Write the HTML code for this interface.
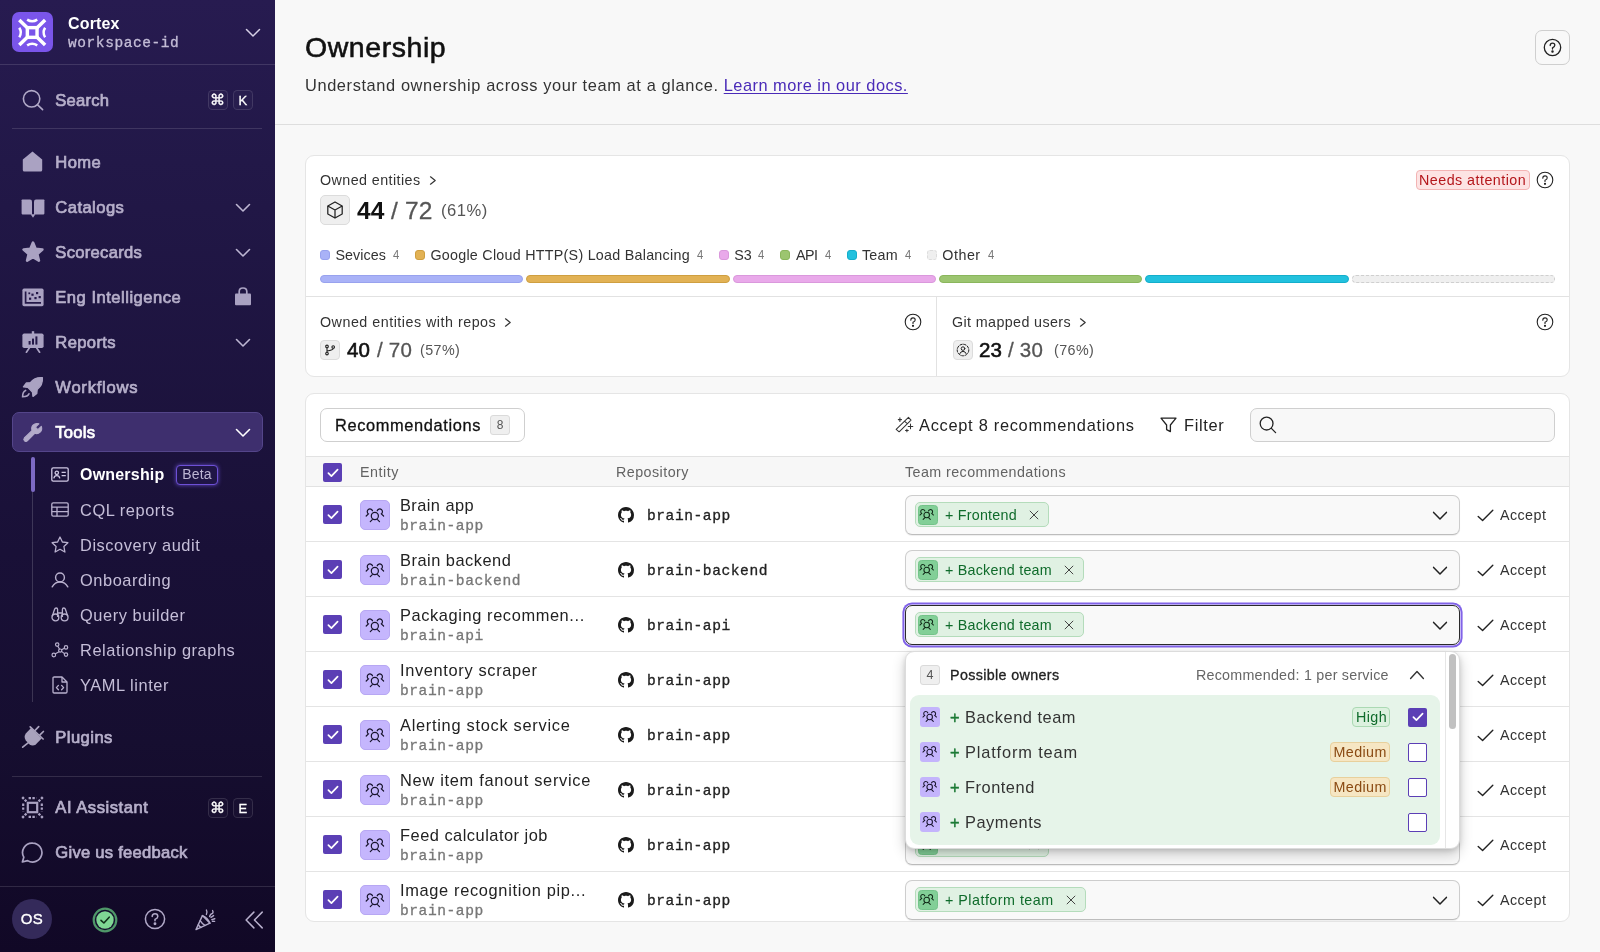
<!DOCTYPE html>
<html lang="en">
<head>
<meta charset="utf-8">
<title>Ownership</title>
<style>
*{box-sizing:border-box;margin:0;padding:0}
html,body{width:1600px;height:952px;overflow:hidden}
body{font-family:"Liberation Sans",sans-serif;background:#f8f8f8;color:#222;position:relative;-webkit-font-smoothing:antialiased}
.mono{font-family:"Liberation Mono",monospace;-webkit-text-stroke:.3px currentColor}
svg{display:block}
.abs{position:absolute}

/* ============ SIDEBAR ============ */
#sb{position:absolute;left:0;top:0;width:275px;height:952px;background:linear-gradient(180deg,#271b50 0%,#221848 17%,#191037 58%,#160e30 78%,#110826 100%);color:#c9c2dc}
#sb .hr{position:absolute;height:1px;background:rgba(255,255,255,.13)}
#sb .nav{position:absolute;left:55.3px;font-weight:400;font-size:16.6px;-webkit-text-stroke:.7px currentColor;line-height:20px;white-space:nowrap;color:#b6afca}
#sb .sub{position:absolute;left:80px;font-size:16.4px;letter-spacing:.55px;line-height:20px;white-space:nowrap;color:#c5bed8}
#sb .ico{position:absolute}
#sb .kbd{position:absolute;width:19.5px;height:19.5px;border:1px solid rgba(255,255,255,.12);border-radius:4.5px;color:#fff;font-size:13px;font-weight:400;-webkit-text-stroke:.3px #fff;text-align:center;line-height:19px;background:rgba(255,255,255,.02)}

/* ============ MAIN ============ */
#main{position:absolute;left:275px;top:0;width:1325px;height:952px;background:#f8f8f8}
.t{position:absolute;white-space:nowrap;line-height:20px}
.card{position:absolute;left:305px;width:1265px;background:#fff;border:1px solid #e5e5e5;border-radius:9px}
.help{position:absolute}
.f14{font-size:14.3px;letter-spacing:.42px}
.f16{font-size:16.4px;letter-spacing:.55px}

#legend i{display:block;width:10px;height:10px;border:1px solid;border-radius:3px;margin-right:5.5px}
#legend b{font-weight:400;color:#777;margin-left:7px;margin-right:16px;font-size:12.5px;letter-spacing:0;width:6px;display:block;transform:scaleX(.9);transform-origin:0 50%}
.bar{flex:1;border:1px solid;border-radius:4px}

/* table */
.cb{position:absolute;width:19px;height:19px;border-radius:2px;background:#5b3fb5}
.cb svg{position:absolute;left:3.5px;top:4.5px}
.cbo{position:absolute;width:19px;height:19px;border-radius:2px;background:#fff;border:1.6px solid #5b3fb5}
.eic{position:absolute;width:30px;height:30px;border-radius:5px;background:#c5b6fd;border:1px solid #b7a7f3}
.eic svg{position:absolute;left:3.7px;top:5.7px}
.rowline{position:absolute;left:306px;width:1263px;height:1px;background:#e4e4e4}
.sel{position:absolute;left:905px;width:555px;height:40px;border:1px solid #cdcdcd;border-bottom-color:#bdbdbd;border-radius:7px;background:#f9f9f9;box-shadow:0 1px 1px rgba(0,0,0,.07)}
.chip{position:absolute;left:915px;height:25px;border:1px solid #b4dcbb;border-radius:5px;background:#e0f1e3}
.chipi{position:absolute;left:917.5px;width:20px;height:20px;border-radius:3.5px;background:#82cf97;border:1px solid #74c38a}
.chipi svg{position:absolute;left:.9px;top:2.6px}
.en{font-size:16.4px;color:#222}
.ei{font-size:14.6px;color:#777;letter-spacing:.55px}
.rp{font-size:14.6px;color:#222;letter-spacing:.55px}
</style>
</head>
<body>
<div id="gw" style="position:absolute;left:0;top:0;width:1600px;height:952px;will-change:transform">

<!-- ================= SIDEBAR ================= -->
<div id="sb">
  <!-- logo -->
  <div class="abs" style="left:12.3px;top:12px;width:40.4px;height:40.4px;border-radius:7px;background:#7a55ea">
    <svg width="40.4" height="40.4" viewBox="0 0 40 40" fill="none" stroke="#fff" stroke-linecap="butt">
      <path d="M7.2 8 L32.8 32.6 M32.8 8 L7.2 32.6" stroke-width="3.5"/>
      <rect x="15.2" y="15.5" width="9.6" height="9.6" fill="#7a55ea" stroke="#fff" stroke-width="3.4"/>
      <path d="M15 7.6 Q20 10.8 25 7.6" stroke-width="2.5"/>
      <path d="M15 33 Q20 29.8 25 33" stroke-width="2.5"/>
      <path d="M7.2 15.6 Q10.2 20.3 7.2 25" stroke-width="2.5"/>
      <path d="M32.8 15.6 Q29.8 20.3 32.8 25" stroke-width="2.5"/>
    </svg>
  </div>
  <div class="abs" style="left:68px;top:14px;font-size:16px;font-weight:700;color:#fff;line-height:20px;letter-spacing:.15px">Cortex</div>
  <div class="abs mono" style="left:68px;top:34px;font-size:14.5px;color:#c3bcd6;line-height:18px;letter-spacing:.58px">workspace-id</div>
  <svg class="ico" style="left:245px;top:28px" width="16" height="10" viewBox="0 0 16 10" fill="none" stroke="#d6d0e6" stroke-width="1.5" stroke-linecap="round" stroke-linejoin="round"><path d="M1.5 1.5 L8 8 L14.5 1.5"/></svg>
  <div class="hr" style="left:0;top:64px;width:275px"></div>

  <!-- search -->
  <svg class="ico" style="left:22px;top:89px" width="22" height="22" viewBox="0 0 22 22" fill="none" stroke="#b1a9c8" stroke-width="1.6" stroke-linecap="round"><circle cx="9.6" cy="9.8" r="8.2"/><path d="M15.6 15.8 L20.6 20.6"/></svg>
  <div class="nav" style="top:91px;letter-spacing:0.22px">Search</div>
  <div class="kbd" style="left:208px;top:90px;font-size:14.5px;line-height:19.5px">⌘</div>
  <div class="kbd" style="left:233px;top:90px">K</div>
  <div class="hr" style="left:12px;top:128px;width:250px"></div>

  <!-- main nav -->
  <svg class="ico" style="left:22px;top:151px" width="21" height="21" viewBox="0 0 21 21" fill="#aaa2c2"><path d="M10.5 0.6 L20.2 8.4 V19 Q20.2 20.6 18.6 20.6 H2.4 Q0.8 20.6 0.8 19 V8.4 Z"/></svg>
  <div class="nav" style="top:153px;letter-spacing:0.40px">Home</div>

  <svg class="ico" style="left:21px;top:199px" width="24" height="20" viewBox="0 0 24 20" fill="#aaa2c2"><path d="M0.6 1.2 Q0.6 0.4 1.4 0.4 H9 Q11 0.4 11 2.4 V15.4 H1.4 Q0.6 15.4 0.6 14.6 Z"/><path d="M23.4 1.2 Q23.4 0.4 22.6 0.4 H15 Q13 0.4 13 2.4 V15.4 H22.6 Q23.4 15.4 23.4 14.6 Z"/><path d="M9.6 15.2 H14.4 L12 18.8 Z"/></svg>
  <div class="nav" style="top:198px;letter-spacing:0.44px">Catalogs</div>
  <svg class="ico" style="left:235px;top:203px" width="16" height="10" viewBox="0 0 16 10" fill="none" stroke="#bdb6d2" stroke-width="1.6" stroke-linecap="round" stroke-linejoin="round"><path d="M1.5 1.5 L8 8 L14.5 1.5"/></svg>

  <svg class="ico" style="left:21px;top:240px" width="24" height="24" viewBox="0 0 24 24" fill="#aaa2c2"><path d="M12 2.6 L14.7 8.9 L21.4 9.5 L16.3 14 L17.9 20.6 L12 17.1 L6.1 20.6 L7.7 14 L2.6 9.5 L9.3 8.9 Z" stroke="#aaa2c2" stroke-width="2.6" stroke-linejoin="round"/></svg>
  <div class="nav" style="top:243px;letter-spacing:0.29px">Scorecards</div>
  <svg class="ico" style="left:235px;top:248px" width="16" height="10" viewBox="0 0 16 10" fill="none" stroke="#bdb6d2" stroke-width="1.6" stroke-linecap="round" stroke-linejoin="round"><path d="M1.5 1.5 L8 8 L14.5 1.5"/></svg>

  <svg class="ico" style="left:22px;top:288px" width="22" height="19" viewBox="0 0 22 19"><rect x="0.4" y="0.6" width="21.2" height="17.6" rx="1.6" fill="#aaa2c2"/><path d="M3.6 3.4 V14.8 H19" fill="none" stroke="#241848" stroke-width="1.7"/><g fill="#241848"><rect x="7" y="9.6" width="2.2" height="2.2"/><rect x="9.4" y="5.6" width="2.2" height="2.2"/><rect x="12.4" y="9" width="2.2" height="2.2"/><rect x="14" y="4" width="2.2" height="2.2"/><rect x="16.6" y="8" width="2.2" height="2.2"/><rect x="6.4" y="4.4" width="1.8" height="1.8"/></g></svg>
  <div class="nav" style="top:288px;letter-spacing:0.49px">Eng Intelligence</div>
  <svg class="ico" style="left:234px;top:287px" width="18" height="19" viewBox="0 0 18 19"><path d="M5.2 7 V4.6 Q5.2 1 9 1 Q12.8 1 12.8 4.6 V7" fill="none" stroke="#aaa2c2" stroke-width="1.7"/><rect x="1" y="6.6" width="16" height="11.6" rx="1" fill="#aaa2c2"/></svg>

  <svg class="ico" style="left:22px;top:331px" width="22" height="23" viewBox="0 0 22 23"><rect x="9.8" y="0.2" width="2.4" height="3" fill="#aaa2c2"/><rect x="0.4" y="2.4" width="21.2" height="14.6" rx="1.8" fill="#aaa2c2"/><path d="M7.6 16.6 L4.4 21.2 M14.4 16.6 L17.6 21.2" stroke="#aaa2c2" stroke-width="1.7" stroke-linecap="round" fill="none"/><g fill="#241848"><rect x="6.6" y="10" width="2" height="3.6"/><rect x="10" y="7.6" width="2" height="6"/><rect x="13.4" y="5.4" width="2" height="8.2"/></g></svg>
  <div class="nav" style="top:333px;letter-spacing:0.37px">Reports</div>
  <svg class="ico" style="left:235px;top:338px" width="16" height="10" viewBox="0 0 16 10" fill="none" stroke="#bdb6d2" stroke-width="1.6" stroke-linecap="round" stroke-linejoin="round"><path d="M1.5 1.5 L8 8 L14.5 1.5"/></svg>

  <svg class="ico" style="left:21px;top:376px" width="23" height="23" viewBox="0 0 23 23"><path d="M21.4 1.6 Q13.6 1 9.4 6.6 L5.4 7 L2.4 10.8 L6.8 11.4 L11.4 16 L12 20.4 L15.8 17.4 L16.2 13.4 Q22 9.2 21.4 1.6 Z" fill="#aaa2c2" stroke="#aaa2c2" stroke-width="1.3" stroke-linejoin="round"/><path d="M4.6 14.4 Q1.6 15.4 1.6 20.8 Q7 20.8 8 17.8" fill="none" stroke="#aaa2c2" stroke-width="1.6" stroke-linecap="round"/></svg>
  <div class="nav" style="top:378px;letter-spacing:0.74px">Workflows</div>

  <!-- tools (active) -->
  <div class="abs" style="left:12px;top:412px;width:251px;height:40px;border-radius:7px;background:#3e2f6e;border:1px solid #54458a"></div>
  <svg class="ico" style="left:22px;top:422px" width="21.5" height="21" viewBox="-0.6 -0.6 24.2 24.2"><path d="M21.4 4.4 L17.4 8.2 L14.6 5.4 L18.6 1.5 Q14.6 0.2 11.8 3 Q9.4 5.6 10.6 9.2 L1.8 17.8 Q0.4 19.6 2 21.2 Q3.6 22.6 5.2 21.2 L13.8 12.4 Q17.4 13.6 20 11.2 Q22.8 8.4 21.4 4.4 Z" fill="#b3abca" stroke="#b3abca" stroke-width="1.2" stroke-linejoin="round"/></svg>
  <div class="nav" style="top:423px;color:#fff;letter-spacing:0.27px">Tools</div>
  <svg class="ico" style="left:235px;top:428px" width="16" height="10" viewBox="0 0 16 10" fill="none" stroke="#fff" stroke-width="1.6" stroke-linecap="round" stroke-linejoin="round"><path d="M1.5 1.5 L8 8 L14.5 1.5"/></svg>

  <!-- sub nav -->
  <div class="abs" style="left:32px;top:457px;width:1px;height:245px;background:rgba(255,255,255,.16)"></div>
  <div class="abs" style="left:30.5px;top:457px;width:4px;height:35px;border-radius:2px;background:#7d6ac4"></div>

  <svg class="ico" style="left:51px;top:467px" width="18" height="15" viewBox="0 0 18 15" fill="none" stroke="#cfc8e4" stroke-width="1.3"><rect x="0.8" y="0.8" width="16.4" height="13.4" rx="1.4"/><circle cx="5.8" cy="5.8" r="1.7"/><path d="M2.8 11.4 Q3.2 8.6 5.8 8.6 Q8.4 8.6 8.8 11.4 M10.6 5.4 H14.8 M10.6 8.6 H14.8"/></svg>
  <div class="sub" style="top:465px;font-weight:700;color:#fff;font-size:16px;letter-spacing:.2px">Ownership</div>
  <div class="abs" style="left:176px;top:465px;width:42px;height:20px;border:1.5px solid #6d50d6;border-radius:4px;box-shadow:0 0 4px rgba(124,92,240,.75);color:#bdb6d4;font-size:14px;line-height:17px;text-align:center;letter-spacing:.2px;background:#1f1546">Beta</div>

  <svg class="ico" style="left:51px;top:502px" width="18" height="15" viewBox="0 0 18 15" fill="none" stroke="#b9b1ce" stroke-width="1.3"><rect x="0.8" y="0.8" width="16.4" height="13.4" rx="1.4"/><path d="M0.8 5.2 H17.2 M0.8 9.6 H17.2 M6 5.2 V14.2"/></svg>
  <div class="sub" style="top:500px">CQL reports</div>

  <svg class="ico" style="left:51px;top:536px" width="18" height="17" viewBox="0 0 18 17" fill="none" stroke="#b9b1ce" stroke-width="1.3" stroke-linejoin="round"><path d="M9 1 L11.4 6 L16.9 6.7 L12.9 10.5 L13.9 16 L9 13.3 L4.1 16 L5.1 10.5 L1.1 6.7 L6.6 6 Z"/></svg>
  <div class="sub" style="top:535px">Discovery audit</div>

  <svg class="ico" style="left:51px;top:572px" width="18" height="16" viewBox="0 0 18 16" fill="none" stroke="#b9b1ce" stroke-width="1.4" stroke-linecap="round"><circle cx="9" cy="5.4" r="4.4"/><path d="M1.2 14.8 Q4 10 9 10 Q14 10 16.8 14.8"/></svg>
  <div class="sub" style="top:570px">Onboarding</div>

  <svg class="ico" style="left:51px;top:607px" width="18" height="15" viewBox="0 0 18 15" fill="none" stroke="#b9b1ce" stroke-width="1.3"><circle cx="4.4" cy="10.4" r="3.4"/><circle cx="13.6" cy="10.4" r="3.4"/><path d="M1.2 9.4 L3.6 2.2 Q4 1 5.2 1 Q6.6 1 6.6 2.4 V10 M16.8 9.4 L14.4 2.2 Q14 1 12.8 1 Q11.4 1 11.4 2.4 V10 M6.6 6 H11.4"/></svg>
  <div class="sub" style="top:605px">Query builder</div>

  <svg class="ico" style="left:51px;top:642px" width="18" height="16" viewBox="0 0 18 16" fill="none" stroke="#b9b1ce" stroke-width="1.2"><circle cx="6.2" cy="2.6" r="1.7"/><circle cx="2.8" cy="13" r="1.8"/><circle cx="15" cy="5.4" r="1.7"/><circle cx="15" cy="12.6" r="1.7"/><circle cx="9.2" cy="8.6" r="1.6"/><path d="M6.8 4.2 L8.6 7.2 M8 9.8 L4 12 M10.6 7.8 L13.4 6.2 M10.6 9.4 L13.4 11.6"/></svg>
  <div class="sub" style="top:640px">Relationship graphs</div>

  <svg class="ico" style="left:52px;top:676px" width="16" height="18" viewBox="0 0 16 18" fill="none" stroke="#b9b1ce" stroke-width="1.3" stroke-linejoin="round"><path d="M1 2.2 Q1 1 2.2 1 H10 L15 6 V15.8 Q15 17 13.8 17 H2.2 Q1 17 1 15.8 Z"/><path d="M10 1 V6 H15" /><path d="M6.4 9.4 L4.4 11.6 L6.4 13.8 M9.6 9.4 L11.6 11.6 L9.6 13.8" stroke-linecap="round"/></svg>
  <div class="sub" style="top:675px">YAML linter</div>

  <!-- plugins -->
  <svg class="ico" style="left:14px;top:718px" width="40" height="40" viewBox="0 0 40 40"><path d="M17 10 L27.6 20.4 L22 26.2 Q18.6 28.8 15.4 26.2 L11.8 22.4 Q9.4 19 11.8 15.6 Z" fill="#a9a2bd"/><path d="M16.2 8.9 L29.1 21 M21.6 11.8 L24.7 8.7 M26.2 16.6 L29.4 13.5 M14.4 24.6 L8.7 29.2" stroke="#a9a2bd" stroke-width="1.7" stroke-linecap="round" fill="none"/></svg>
  <div class="nav" style="top:728px;letter-spacing:0.44px">Plugins</div>

  <div class="hr" style="left:12px;top:776px;width:250px"></div>

  <!-- AI assistant -->
  <svg class="ico" style="left:21px;top:796px" width="23" height="23" viewBox="0 0 23 23" fill="none" stroke="#aaa2c2"><rect x="6.8" y="6.8" width="9.4" height="9.4" stroke-width="2.2"/><path d="M1.2 1.2 L6 6 M21.8 1.2 L17 6 M1.2 21.8 L6 17 M21.8 21.8 L17 17" stroke-width="2.4" stroke-dasharray="2.4 1.2"/><path d="M7.6 2.2 H15.4 M7.6 20.8 H15.4 M2.2 7.6 V15.4 M20.8 7.6 V15.4" stroke-width="2.2" stroke-dasharray="2.4 1.4"/></svg>
  <div class="nav" style="top:798px;letter-spacing:0.53px">AI Assistant</div>
  <div class="kbd" style="left:208px;top:798px;font-size:14.5px;line-height:19.5px">⌘</div>
  <div class="kbd" style="left:233px;top:798px">E</div>

  <svg class="ico" style="left:21px;top:842px" width="23" height="22" viewBox="0 0 23 22" fill="none" stroke="#aaa2c2" stroke-width="1.7" stroke-linejoin="round"><path d="M11.8 1.2 A9.4 9.4 0 1 1 6.6 18.6 L1.4 20 L2.8 15.2 A9.4 9.4 0 0 1 11.8 1.2 Z"/></svg>
  <div class="nav" style="top:843px;letter-spacing:0.25px">Give us feedback</div>

  <div class="hr" style="left:0;top:886px;width:275px"></div>

  <!-- bottom bar -->
  <div class="abs" style="left:12px;top:899px;width:40px;height:40px;border-radius:50%;background:#342a5a;color:#fff;font-size:15px;text-align:center;line-height:40px;letter-spacing:.3px;-webkit-text-stroke:.35px #fff">OS</div>
  <svg class="ico" style="left:92px;top:906.5px" width="26" height="26" viewBox="0 0 26 26"><circle cx="13" cy="13" r="11.3" fill="#15102e" stroke="#4f9869" stroke-width="2.2"/><circle cx="13" cy="13" r="8.7" fill="#7fd694"/><path d="M9 13.3 L11.9 16 L17.2 10.2" fill="none" stroke="#12301c" stroke-width="1.6" stroke-linecap="round" stroke-linejoin="round"/></svg>
  <svg class="ico" style="left:144px;top:908px" width="22" height="22" viewBox="0 0 22 22" fill="none" stroke="#b1a9c8" stroke-width="1.5" stroke-linecap="round"><circle cx="11" cy="11" r="9.6"/><path d="M8.2 8.6 Q8.2 5.8 11 5.8 Q13.8 5.8 13.8 8.4 Q13.8 10 11 11.4 V12.8"/><circle cx="11" cy="15.8" r=".7" fill="#b1a9c8"/></svg>
  <svg class="ico" style="left:194px;top:907.5px" width="24" height="24" viewBox="0 0 24 24" fill="none" stroke="#b1a9c8" stroke-width="1.4" stroke-linecap="round" stroke-linejoin="round"><path d="M8.4 7.6 L2 21.6 L16 15.2 Z"/><path d="M8.4 7.6 Q13.6 9.6 16 15.2"/><path d="M6.2 12.6 Q8.4 16.2 11 17.4 M4.4 16.6 Q5.4 18.6 7 19.4"/><path d="M12.4 6.4 Q13.6 4.2 12.4 2 M15.6 8.6 Q16 6 18.6 5.4 Q19.6 3.8 18.6 2.6 M17.8 11.6 L20.8 10.8 M17 9.4 L19.6 7.6 M20.6 13.4 L18.4 13.2"/></svg>
  <svg class="ico" style="left:245px;top:910.5px" width="18.5" height="18" viewBox="0 0 20 19" fill="none" stroke="#b9b1ce" stroke-width="1.6" stroke-linecap="round" stroke-linejoin="round"><path d="M9.6 1 L1.2 9.5 L9.6 18 M18.6 1 L10.2 9.5 L18.6 18"/></svg>
</div>


<div id="main"></div>
<div class="abs" style="left:275px;top:124px;width:1325px;height:1px;background:#dedede"></div>
<div class="t" style="left:305px;top:30px;font-size:28.5px;line-height:34px;letter-spacing:.55px;color:#111;-webkit-text-stroke:.55px #111">Ownership</div>
<div class="t" style="left:305px;top:75px;font-size:16.4px;letter-spacing:.6px;color:#333">Understand ownership across your team at a glance. <span style="color:#4a2bb8;text-decoration:underline;text-underline-offset:2px;letter-spacing:.48px">Learn more in our docs.</span></div>
<div class="abs" style="left:1535px;top:30px;width:35px;height:35px;border:1px solid #cfcfcf;border-radius:7px;background:#f8f8f8"></div>
<svg class="abs" style="left:1543px;top:38px" width="19" height="19" viewBox="0 0 19 19" fill="none" stroke="#222" stroke-width="1.3" stroke-linecap="round"><circle cx="9.5" cy="9.5" r="8.2"/><path d="M7.2 7.6 Q7.2 5.2 9.5 5.2 Q11.8 5.2 11.8 7.3 Q11.8 8.7 9.5 9.9 V11"/><circle cx="9.5" cy="13.6" r=".6" fill="#222"/></svg>

<!-- ===== stats card ===== -->
<div class="card" style="top:155px;height:222px"></div>
<div class="t f14" style="left:320px;top:170px;color:#333">Owned entities</div>
<svg class="abs" style="left:429px;top:176px" width="8" height="9" viewBox="0 0 8 9" fill="none" stroke="#333" stroke-width="1.2" stroke-linecap="round" stroke-linejoin="round"><path d="M1.5 .8 L6.2 4.5 L1.5 8.2"/></svg>
<div class="abs" style="left:320px;top:195px;width:30px;height:30px;border:1px solid #dcdcdc;border-radius:5px;background:#efefef"></div>
<svg class="abs" style="left:326px;top:201px" width="18" height="18" viewBox="0 0 18 18" fill="none" stroke="#222" stroke-width="1.25" stroke-linejoin="round"><path d="M9 1 L16.2 5 V13 L9 17 L1.8 13 V5 Z"/><path d="M1.8 5 L9 9 L16.2 5 M9 9 V17"/></svg>
<div class="t" style="left:357px;top:195.5px;font-size:24.5px;line-height:30px;font-weight:700;color:#111;letter-spacing:.2px">44</div>
<div class="t" style="left:391px;top:195.5px;font-size:24.5px;line-height:30px;color:#555;letter-spacing:.2px;-webkit-text-stroke:.3px #555">/ 72</div>
<div class="t" style="left:441px;top:201px;font-size:16.6px;color:#555;letter-spacing:.5px">(61%)</div>

<div class="abs" style="left:1416px;top:170px;width:114px;height:20px;border:1px solid #f3b4b4;border-radius:4px;background:#fde3e3"></div>
<div class="t f14" style="left:1419px;top:170px;color:#b4161b;letter-spacing:.47px">Needs attention</div>
<svg class="abs" style="left:1536px;top:171px" width="18" height="18" viewBox="0 0 18 18" fill="none" stroke="#222" stroke-width="1.1" stroke-linecap="round"><circle cx="9" cy="9" r="7.8"/><path d="M6.8 7.2 Q6.8 4.9 9 4.9 Q11.2 4.9 11.2 6.9 Q11.2 8.2 9 9.3 V10.4"/><circle cx="9" cy="12.8" r=".55" fill="#222"/></svg>

<!-- legend -->
<div id="legend" class="abs f14" style="left:320px;top:245px;height:20px;display:flex;align-items:center;color:#333;white-space:nowrap;line-height:20px">
  <i style="background:#a9b2f7;border-color:#98a2ee"></i><span style="letter-spacing:.05px">Sevices</span><b>4</b>
  <i style="background:#e2b255;border-color:#cf9f40"></i><span style="letter-spacing:.26px">Google Cloud HTTP(S) Load Balancing</span><b>4</b>
  <i style="background:#e9a9ea;border-color:#da98dc"></i><span style="letter-spacing:-.2px">S3</span><b>4</b>
  <i style="background:#9cc570;border-color:#8ab65c"></i><span style="letter-spacing:-.5px">API</span><b>4</b>
  <i style="background:#22c1de;border-color:#14aecb"></i><span style="letter-spacing:.22px">Team</span><b>4</b>
  <i style="background:#efefef;border-color:#dcdcdc;border-style:dashed"></i><span style="letter-spacing:.5px">Other</span><b>4</b>
</div>
<div class="abs" style="left:320px;top:275px;width:1235px;height:7.6px;display:flex;gap:3px">
  <div class="bar" style="background:#a9b2f7;border-color:#98a2ee"></div>
  <div class="bar" style="background:#e2b255;border-color:#cf9f40"></div>
  <div class="bar" style="background:#e9a9ea;border-color:#da98dc"></div>
  <div class="bar" style="background:#9cc570;border-color:#8ab65c"></div>
  <div class="bar" style="background:#22c1de;border-color:#14aecb"></div>
  <div class="bar" style="background:#efefef;border-color:#cfcfcf;border-style:dashed"></div>
</div>
<div class="abs" style="left:306px;top:296px;width:1263px;height:1px;background:#e2e2e2"></div>
<div class="abs" style="left:936px;top:297px;width:1px;height:79px;background:#e2e2e2"></div>

<div class="t f14" style="left:320px;top:312px;color:#333;letter-spacing:.5px">Owned entities with repos</div>
<svg class="abs" style="left:504px;top:318px" width="8" height="9" viewBox="0 0 8 9" fill="none" stroke="#333" stroke-width="1.2" stroke-linecap="round" stroke-linejoin="round"><path d="M1.5 .8 L6.2 4.5 L1.5 8.2"/></svg>
<svg class="abs" style="left:904px;top:313px" width="18" height="18" viewBox="0 0 18 18" fill="none" stroke="#222" stroke-width="1.1" stroke-linecap="round"><circle cx="9" cy="9" r="7.8"/><path d="M6.8 7.2 Q6.8 4.9 9 4.9 Q11.2 4.9 11.2 6.9 Q11.2 8.2 9 9.3 V10.4"/><circle cx="9" cy="12.8" r=".55" fill="#222"/></svg>
<div class="abs" style="left:320px;top:340px;width:20px;height:20px;border:1px solid #dcdcdc;border-radius:4px;background:#efefef"></div>
<svg class="abs" style="left:324px;top:344px" width="12" height="12" viewBox="0 0 12 12" fill="none" stroke="#222" stroke-width="1.1"><circle cx="3" cy="2.4" r="1.3"/><circle cx="3" cy="9.6" r="1.3"/><circle cx="9.2" cy="3" r="1.3"/><path d="M3 3.7 V8.3 M9.2 4.3 Q9.2 6.4 3 7"/></svg>
<div class="t" style="left:347px;top:338px;font-size:20.5px;line-height:24px;color:#111;letter-spacing:.2px;-webkit-text-stroke:.6px #111">40</div>
<div class="t" style="left:377px;top:338px;font-size:20.5px;line-height:24px;color:#555;letter-spacing:.2px;-webkit-text-stroke:.3px #555">/ 70</div>
<div class="t f14" style="left:420px;top:340px;color:#555">(57%)</div>

<div class="t f14" style="left:952px;top:312px;color:#333;letter-spacing:.38px">Git mapped users</div>
<svg class="abs" style="left:1079px;top:318px" width="8" height="9" viewBox="0 0 8 9" fill="none" stroke="#333" stroke-width="1.2" stroke-linecap="round" stroke-linejoin="round"><path d="M1.5 .8 L6.2 4.5 L1.5 8.2"/></svg>
<svg class="abs" style="left:1536px;top:313px" width="18" height="18" viewBox="0 0 18 18" fill="none" stroke="#222" stroke-width="1.1" stroke-linecap="round"><circle cx="9" cy="9" r="7.8"/><path d="M6.8 7.2 Q6.8 4.9 9 4.9 Q11.2 4.9 11.2 6.9 Q11.2 8.2 9 9.3 V10.4"/><circle cx="9" cy="12.8" r=".55" fill="#222"/></svg>
<div class="abs" style="left:953px;top:340px;width:20px;height:20px;border:1px solid #dcdcdc;border-radius:4px;background:#efefef"></div>
<svg class="abs" style="left:956px;top:343px" width="14" height="14" viewBox="0 0 14 14" fill="none" stroke="#222" stroke-width="1" stroke-linecap="round"><circle cx="7" cy="7" r="5.8" stroke-dasharray="2.4 1.5"/><circle cx="7" cy="5.6" r="1.8"/><path d="M3.8 10.6 Q4.6 8.4 7 8.4 Q9.4 8.4 10.2 10.6"/></svg>
<div class="t" style="left:979px;top:338px;font-size:20.5px;line-height:24px;color:#111;letter-spacing:.2px;-webkit-text-stroke:.6px #111">23</div>
<div class="t" style="left:1008px;top:338px;font-size:20.5px;line-height:24px;color:#555;letter-spacing:.2px;-webkit-text-stroke:.3px #555">/ 30</div>
<div class="t f14" style="left:1054px;top:340px;color:#555">(76%)</div>

<!-- ===== table card ===== -->
<div class="card" style="top:392.5px;height:529.5px"></div>
<div class="abs" style="left:320px;top:407.6px;width:205px;height:34.2px;border:1px solid #cfcfcf;border-radius:7px;background:#fff"></div>
<div class="t" style="left:335px;top:415px;font-size:16.4px;letter-spacing:.62px;color:#111;-webkit-text-stroke:.3px #111">Recommendations</div>
<div class="abs" style="left:490px;top:415px;width:20px;height:20px;border:1px solid #dadada;border-radius:3px;background:#efefef;font-size:12px;line-height:18px;text-align:center;color:#555">8</div>
<svg class="abs" style="left:890px;top:410px" width="30" height="30" viewBox="0 0 30 30" fill="none" stroke="#333" stroke-width="1.05" stroke-linecap="round" stroke-linejoin="round"><path d="M18.45 7.4 L21 10.1 L9.15 21.8 L6.15 19.4 Z M14.7 11.4 L17.35 13.7"/><path d="M9.9 7.8 V11.4 M8.3 9.6 H11.5 M20.5 14.1 V18.7 M18.2 16.4 H22.8 M16.9 19.2 V21.8 M15.5 20.5 H18.3"/></svg>
<div class="t" style="left:919px;top:415px;font-size:16.4px;letter-spacing:.71px;color:#222">Accept 8 recommendations</div>
<svg class="abs" style="left:1160px;top:417px" width="17" height="16" viewBox="0 0 17 16" fill="none" stroke="#222" stroke-width="1.3" stroke-linejoin="round"><path d="M1 1.2 H16 L10.4 8 V14.6 L6.6 12.6 V8 Z"/></svg>
<div class="t" style="left:1184px;top:415px;font-size:16.4px;letter-spacing:.68px;color:#222">Filter</div>
<div class="abs" style="left:1250px;top:407.6px;width:305px;height:34.2px;border:1px solid #cfcfcf;border-radius:7px;background:#f8f8f8"></div>
<svg class="abs" style="left:1259px;top:416px" width="18" height="18" viewBox="0 0 18 18" fill="none" stroke="#222" stroke-width="1.3" stroke-linecap="round"><circle cx="7.6" cy="7.6" r="6.4"/><path d="M12.4 12.4 L16.6 16.6"/></svg>
<div class="abs" style="left:306px;top:456px;width:1263px;height:31px;background:#f7f7f7;border-top:1px solid #e2e2e2;border-bottom:1px solid #e2e2e2"></div>
<div class="cb" style="left:323px;top:463px"><svg width="12" height="10" viewBox="0 0 12 10" fill="none" stroke="#fff" stroke-width="1.7" stroke-linecap="round" stroke-linejoin="round"><path d="M1.4 5.2 L4.4 8.2 L10.6 1.6"/></svg></div>
<div class="t f14" style="left:360px;top:462px;color:#636363;letter-spacing:.54px">Entity</div>
<div class="t f14" style="left:616px;top:462px;color:#636363;letter-spacing:.45px">Repository</div>
<div class="t f14" style="left:905px;top:462px;color:#636363;letter-spacing:.42px">Team recommendations</div>
<div class="cb" style="left:323px;top:505px"><svg width="12" height="10" viewBox="0 0 12 10" fill="none" stroke="#fff" stroke-width="1.7" stroke-linecap="round" stroke-linejoin="round"><path d="M1.4 5.2 L4.4 8.2 L10.6 1.6"/></svg></div>
<div class="eic" style="left:360px;top:500px"><svg width="20" height="16" viewBox="0 0 20 16" fill="none" stroke="#17132b" stroke-width="1.2" stroke-linecap="round"><circle cx="9.85" cy="9" r="3.55"/><path d="M7.3 12.7 L5.3 14.7 M12.5 12.7 L14.5 14.7"/><path d="M7.5 3.8 A2.7 2.7 0 1 0 3.45 6.9 L1.2 9"/><path d="M12.2 3.8 A2.7 2.7 0 1 1 16.3 6.9 L18.6 9"/></svg></div>
<div class="t en" style="left:400px;top:495px;letter-spacing:0.43px">Brain app</div>
<div class="t mono ei" style="left:400px;top:515.5px">brain-app</div>
<svg class="abs" style="left:618px;top:507px" width="16" height="16" viewBox="0 0 16 16" fill="#1b1b1b"><path d="M8 0C3.58 0 0 3.58 0 8c0 3.54 2.29 6.53 5.47 7.59.4.07.55-.17.55-.38 0-.19-.01-.82-.01-1.49-2.01.37-2.53-.49-2.69-.94-.09-.23-.48-.94-.82-1.13-.28-.15-.68-.52-.01-.53.63-.01 1.08.58 1.23.82.72 1.21 1.87.87 2.33.66.07-.52.28-.87.51-1.07-1.78-.2-3.64-.89-3.64-3.95 0-.87.31-1.59.82-2.15-.08-.2-.36-1.02.08-2.12 0 0 .67-.21 2.2.82.64-.18 1.32-.27 2-.27s1.36.09 2 .27c1.53-1.04 2.2-.82 2.2-.82.44 1.1.16 1.92.08 2.12.51.56.82 1.27.82 2.15 0 3.07-1.87 3.75-3.65 3.95.29.25.54.73.54 1.48 0 1.07-.01 1.93-.01 2.2 0 .21.15.46.55.38A8.01 8.01 0 0016 8c0-4.42-3.58-8-8-8z"/></svg>
<div class="t mono rp" style="left:647px;top:505.5px">brain-app</div>
<div class="sel" style="top:495px"></div>
<div class="chip" style="top:502px;width:134px"></div>
<div class="chipi" style="top:504.5px"><svg width="15.6" height="12.5" viewBox="0 0 20 16" fill="none" stroke="#0f2616" stroke-width="1.3" stroke-linecap="round"><circle cx="9.85" cy="9" r="3.55"/><path d="M7.3 12.7 L5.3 14.7 M12.5 12.7 L14.5 14.7"/><path d="M7.5 3.8 A2.7 2.7 0 1 0 3.45 6.9 L1.2 9"/><path d="M12.2 3.8 A2.7 2.7 0 1 1 16.3 6.9 L18.6 9"/></svg></div>
<div class="t f14" style="left:945px;top:505px;color:#0f6b2b;letter-spacing:.23px">+ Frontend</div>
<svg class="abs" style="left:1029px;top:509.5px" width="10" height="10" viewBox="0 0 11 11" fill="none" stroke="#444" stroke-width="1.1" stroke-linecap="round"><path d="M1.2 1.2 L9.8 9.8 M9.8 1.2 L1.2 9.8"/></svg>
<svg class="abs" style="left:1432px;top:511px" width="16" height="10" viewBox="0 0 16 10" fill="none" stroke="#222" stroke-width="1.5" stroke-linecap="round" stroke-linejoin="round"><path d="M1.6 1.4 L8 8 L14.4 1.4"/></svg>
<svg class="abs" style="left:1477px;top:509px" width="17" height="13" viewBox="0 0 17 13" fill="none" stroke="#222" stroke-width="1.4" stroke-linecap="round" stroke-linejoin="round"><path d="M1.2 7.4 L5.6 11.6 L15.8 1.2"/></svg>
<div class="t f14" style="left:1500px;top:504.5px;color:#333;letter-spacing:.43px">Accept</div>
<div class="rowline" style="top:541px"></div>
<div class="cb" style="left:323px;top:560px"><svg width="12" height="10" viewBox="0 0 12 10" fill="none" stroke="#fff" stroke-width="1.7" stroke-linecap="round" stroke-linejoin="round"><path d="M1.4 5.2 L4.4 8.2 L10.6 1.6"/></svg></div>
<div class="eic" style="left:360px;top:555px"><svg width="20" height="16" viewBox="0 0 20 16" fill="none" stroke="#17132b" stroke-width="1.2" stroke-linecap="round"><circle cx="9.85" cy="9" r="3.55"/><path d="M7.3 12.7 L5.3 14.7 M12.5 12.7 L14.5 14.7"/><path d="M7.5 3.8 A2.7 2.7 0 1 0 3.45 6.9 L1.2 9"/><path d="M12.2 3.8 A2.7 2.7 0 1 1 16.3 6.9 L18.6 9"/></svg></div>
<div class="t en" style="left:400px;top:550px;letter-spacing:0.5px">Brain backend</div>
<div class="t mono ei" style="left:400px;top:570.5px">brain-backend</div>
<svg class="abs" style="left:618px;top:562px" width="16" height="16" viewBox="0 0 16 16" fill="#1b1b1b"><path d="M8 0C3.58 0 0 3.58 0 8c0 3.54 2.29 6.53 5.47 7.59.4.07.55-.17.55-.38 0-.19-.01-.82-.01-1.49-2.01.37-2.53-.49-2.69-.94-.09-.23-.48-.94-.82-1.13-.28-.15-.68-.52-.01-.53.63-.01 1.08.58 1.23.82.72 1.21 1.87.87 2.33.66.07-.52.28-.87.51-1.07-1.78-.2-3.64-.89-3.64-3.95 0-.87.31-1.59.82-2.15-.08-.2-.36-1.02.08-2.12 0 0 .67-.21 2.2.82.64-.18 1.32-.27 2-.27s1.36.09 2 .27c1.53-1.04 2.2-.82 2.2-.82.44 1.1.16 1.92.08 2.12.51.56.82 1.27.82 2.15 0 3.07-1.87 3.75-3.65 3.95.29.25.54.73.54 1.48 0 1.07-.01 1.93-.01 2.2 0 .21.15.46.55.38A8.01 8.01 0 0016 8c0-4.42-3.58-8-8-8z"/></svg>
<div class="t mono rp" style="left:647px;top:560.5px">brain-backend</div>
<div class="sel" style="top:550px"></div>
<div class="chip" style="top:557px;width:169px"></div>
<div class="chipi" style="top:559.5px"><svg width="15.6" height="12.5" viewBox="0 0 20 16" fill="none" stroke="#0f2616" stroke-width="1.3" stroke-linecap="round"><circle cx="9.85" cy="9" r="3.55"/><path d="M7.3 12.7 L5.3 14.7 M12.5 12.7 L14.5 14.7"/><path d="M7.5 3.8 A2.7 2.7 0 1 0 3.45 6.9 L1.2 9"/><path d="M12.2 3.8 A2.7 2.7 0 1 1 16.3 6.9 L18.6 9"/></svg></div>
<div class="t f14" style="left:945px;top:560px;color:#0f6b2b;letter-spacing:.23px">+ Backend team</div>
<svg class="abs" style="left:1064px;top:564.5px" width="10" height="10" viewBox="0 0 11 11" fill="none" stroke="#444" stroke-width="1.1" stroke-linecap="round"><path d="M1.2 1.2 L9.8 9.8 M9.8 1.2 L1.2 9.8"/></svg>
<svg class="abs" style="left:1432px;top:566px" width="16" height="10" viewBox="0 0 16 10" fill="none" stroke="#222" stroke-width="1.5" stroke-linecap="round" stroke-linejoin="round"><path d="M1.6 1.4 L8 8 L14.4 1.4"/></svg>
<svg class="abs" style="left:1477px;top:564px" width="17" height="13" viewBox="0 0 17 13" fill="none" stroke="#222" stroke-width="1.4" stroke-linecap="round" stroke-linejoin="round"><path d="M1.2 7.4 L5.6 11.6 L15.8 1.2"/></svg>
<div class="t f14" style="left:1500px;top:559.5px;color:#333;letter-spacing:.43px">Accept</div>
<div class="rowline" style="top:596px"></div>
<div class="cb" style="left:323px;top:615px"><svg width="12" height="10" viewBox="0 0 12 10" fill="none" stroke="#fff" stroke-width="1.7" stroke-linecap="round" stroke-linejoin="round"><path d="M1.4 5.2 L4.4 8.2 L10.6 1.6"/></svg></div>
<div class="eic" style="left:360px;top:610px"><svg width="20" height="16" viewBox="0 0 20 16" fill="none" stroke="#17132b" stroke-width="1.2" stroke-linecap="round"><circle cx="9.85" cy="9" r="3.55"/><path d="M7.3 12.7 L5.3 14.7 M12.5 12.7 L14.5 14.7"/><path d="M7.5 3.8 A2.7 2.7 0 1 0 3.45 6.9 L1.2 9"/><path d="M12.2 3.8 A2.7 2.7 0 1 1 16.3 6.9 L18.6 9"/></svg></div>
<div class="t en" style="left:400px;top:605px;letter-spacing:0.60px">Packaging recommen...</div>
<div class="t mono ei" style="left:400px;top:625.5px">brain-api</div>
<svg class="abs" style="left:618px;top:617px" width="16" height="16" viewBox="0 0 16 16" fill="#1b1b1b"><path d="M8 0C3.58 0 0 3.58 0 8c0 3.54 2.29 6.53 5.47 7.59.4.07.55-.17.55-.38 0-.19-.01-.82-.01-1.49-2.01.37-2.53-.49-2.69-.94-.09-.23-.48-.94-.82-1.13-.28-.15-.68-.52-.01-.53.63-.01 1.08.58 1.23.82.72 1.21 1.87.87 2.33.66.07-.52.28-.87.51-1.07-1.78-.2-3.64-.89-3.64-3.95 0-.87.31-1.59.82-2.15-.08-.2-.36-1.02.08-2.12 0 0 .67-.21 2.2.82.64-.18 1.32-.27 2-.27s1.36.09 2 .27c1.53-1.04 2.2-.82 2.2-.82.44 1.1.16 1.92.08 2.12.51.56.82 1.27.82 2.15 0 3.07-1.87 3.75-3.65 3.95.29.25.54.73.54 1.48 0 1.07-.01 1.93-.01 2.2 0 .21.15.46.55.38A8.01 8.01 0 0016 8c0-4.42-3.58-8-8-8z"/></svg>
<div class="t mono rp" style="left:647px;top:615.5px">brain-api</div>
<div class="sel" style="top:605px;border:1.5px solid #2b2b2b;box-shadow:0 0 0 .6px #f4f2fb,0 0 0 2.6px #8163e8"></div>
<div class="chip" style="top:612px;width:169px"></div>
<div class="chipi" style="top:614.5px"><svg width="15.6" height="12.5" viewBox="0 0 20 16" fill="none" stroke="#0f2616" stroke-width="1.3" stroke-linecap="round"><circle cx="9.85" cy="9" r="3.55"/><path d="M7.3 12.7 L5.3 14.7 M12.5 12.7 L14.5 14.7"/><path d="M7.5 3.8 A2.7 2.7 0 1 0 3.45 6.9 L1.2 9"/><path d="M12.2 3.8 A2.7 2.7 0 1 1 16.3 6.9 L18.6 9"/></svg></div>
<div class="t f14" style="left:945px;top:615px;color:#0f6b2b;letter-spacing:.23px">+ Backend team</div>
<svg class="abs" style="left:1064px;top:619.5px" width="10" height="10" viewBox="0 0 11 11" fill="none" stroke="#444" stroke-width="1.1" stroke-linecap="round"><path d="M1.2 1.2 L9.8 9.8 M9.8 1.2 L1.2 9.8"/></svg>
<svg class="abs" style="left:1432px;top:621px" width="16" height="10" viewBox="0 0 16 10" fill="none" stroke="#222" stroke-width="1.5" stroke-linecap="round" stroke-linejoin="round"><path d="M1.6 1.4 L8 8 L14.4 1.4"/></svg>
<svg class="abs" style="left:1477px;top:619px" width="17" height="13" viewBox="0 0 17 13" fill="none" stroke="#222" stroke-width="1.4" stroke-linecap="round" stroke-linejoin="round"><path d="M1.2 7.4 L5.6 11.6 L15.8 1.2"/></svg>
<div class="t f14" style="left:1500px;top:614.5px;color:#333;letter-spacing:.43px">Accept</div>
<div class="rowline" style="top:651px"></div>
<div class="cb" style="left:323px;top:670px"><svg width="12" height="10" viewBox="0 0 12 10" fill="none" stroke="#fff" stroke-width="1.7" stroke-linecap="round" stroke-linejoin="round"><path d="M1.4 5.2 L4.4 8.2 L10.6 1.6"/></svg></div>
<div class="eic" style="left:360px;top:665px"><svg width="20" height="16" viewBox="0 0 20 16" fill="none" stroke="#17132b" stroke-width="1.2" stroke-linecap="round"><circle cx="9.85" cy="9" r="3.55"/><path d="M7.3 12.7 L5.3 14.7 M12.5 12.7 L14.5 14.7"/><path d="M7.5 3.8 A2.7 2.7 0 1 0 3.45 6.9 L1.2 9"/><path d="M12.2 3.8 A2.7 2.7 0 1 1 16.3 6.9 L18.6 9"/></svg></div>
<div class="t en" style="left:400px;top:660px;letter-spacing:0.65px">Inventory scraper</div>
<div class="t mono ei" style="left:400px;top:680.5px">brain-app</div>
<svg class="abs" style="left:618px;top:672px" width="16" height="16" viewBox="0 0 16 16" fill="#1b1b1b"><path d="M8 0C3.58 0 0 3.58 0 8c0 3.54 2.29 6.53 5.47 7.59.4.07.55-.17.55-.38 0-.19-.01-.82-.01-1.49-2.01.37-2.53-.49-2.69-.94-.09-.23-.48-.94-.82-1.13-.28-.15-.68-.52-.01-.53.63-.01 1.08.58 1.23.82.72 1.21 1.87.87 2.33.66.07-.52.28-.87.51-1.07-1.78-.2-3.64-.89-3.64-3.95 0-.87.31-1.59.82-2.15-.08-.2-.36-1.02.08-2.12 0 0 .67-.21 2.2.82.64-.18 1.32-.27 2-.27s1.36.09 2 .27c1.53-1.04 2.2-.82 2.2-.82.44 1.1.16 1.92.08 2.12.51.56.82 1.27.82 2.15 0 3.07-1.87 3.75-3.65 3.95.29.25.54.73.54 1.48 0 1.07-.01 1.93-.01 2.2 0 .21.15.46.55.38A8.01 8.01 0 0016 8c0-4.42-3.58-8-8-8z"/></svg>
<div class="t mono rp" style="left:647px;top:670.5px">brain-app</div>
<div class="sel" style="top:660px"></div>
<svg class="abs" style="left:1477px;top:674px" width="17" height="13" viewBox="0 0 17 13" fill="none" stroke="#222" stroke-width="1.4" stroke-linecap="round" stroke-linejoin="round"><path d="M1.2 7.4 L5.6 11.6 L15.8 1.2"/></svg>
<div class="t f14" style="left:1500px;top:669.5px;color:#333;letter-spacing:.43px">Accept</div>
<div class="rowline" style="top:706px"></div>
<div class="cb" style="left:323px;top:725px"><svg width="12" height="10" viewBox="0 0 12 10" fill="none" stroke="#fff" stroke-width="1.7" stroke-linecap="round" stroke-linejoin="round"><path d="M1.4 5.2 L4.4 8.2 L10.6 1.6"/></svg></div>
<div class="eic" style="left:360px;top:720px"><svg width="20" height="16" viewBox="0 0 20 16" fill="none" stroke="#17132b" stroke-width="1.2" stroke-linecap="round"><circle cx="9.85" cy="9" r="3.55"/><path d="M7.3 12.7 L5.3 14.7 M12.5 12.7 L14.5 14.7"/><path d="M7.5 3.8 A2.7 2.7 0 1 0 3.45 6.9 L1.2 9"/><path d="M12.2 3.8 A2.7 2.7 0 1 1 16.3 6.9 L18.6 9"/></svg></div>
<div class="t en" style="left:400px;top:715px;letter-spacing:0.71px">Alerting stock service</div>
<div class="t mono ei" style="left:400px;top:735.5px">brain-app</div>
<svg class="abs" style="left:618px;top:727px" width="16" height="16" viewBox="0 0 16 16" fill="#1b1b1b"><path d="M8 0C3.58 0 0 3.58 0 8c0 3.54 2.29 6.53 5.47 7.59.4.07.55-.17.55-.38 0-.19-.01-.82-.01-1.49-2.01.37-2.53-.49-2.69-.94-.09-.23-.48-.94-.82-1.13-.28-.15-.68-.52-.01-.53.63-.01 1.08.58 1.23.82.72 1.21 1.87.87 2.33.66.07-.52.28-.87.51-1.07-1.78-.2-3.64-.89-3.64-3.95 0-.87.31-1.59.82-2.15-.08-.2-.36-1.02.08-2.12 0 0 .67-.21 2.2.82.64-.18 1.32-.27 2-.27s1.36.09 2 .27c1.53-1.04 2.2-.82 2.2-.82.44 1.1.16 1.92.08 2.12.51.56.82 1.27.82 2.15 0 3.07-1.87 3.75-3.65 3.95.29.25.54.73.54 1.48 0 1.07-.01 1.93-.01 2.2 0 .21.15.46.55.38A8.01 8.01 0 0016 8c0-4.42-3.58-8-8-8z"/></svg>
<div class="t mono rp" style="left:647px;top:725.5px">brain-app</div>
<div class="sel" style="top:715px"></div>
<svg class="abs" style="left:1477px;top:729px" width="17" height="13" viewBox="0 0 17 13" fill="none" stroke="#222" stroke-width="1.4" stroke-linecap="round" stroke-linejoin="round"><path d="M1.2 7.4 L5.6 11.6 L15.8 1.2"/></svg>
<div class="t f14" style="left:1500px;top:724.5px;color:#333;letter-spacing:.43px">Accept</div>
<div class="rowline" style="top:761px"></div>
<div class="cb" style="left:323px;top:780px"><svg width="12" height="10" viewBox="0 0 12 10" fill="none" stroke="#fff" stroke-width="1.7" stroke-linecap="round" stroke-linejoin="round"><path d="M1.4 5.2 L4.4 8.2 L10.6 1.6"/></svg></div>
<div class="eic" style="left:360px;top:775px"><svg width="20" height="16" viewBox="0 0 20 16" fill="none" stroke="#17132b" stroke-width="1.2" stroke-linecap="round"><circle cx="9.85" cy="9" r="3.55"/><path d="M7.3 12.7 L5.3 14.7 M12.5 12.7 L14.5 14.7"/><path d="M7.5 3.8 A2.7 2.7 0 1 0 3.45 6.9 L1.2 9"/><path d="M12.2 3.8 A2.7 2.7 0 1 1 16.3 6.9 L18.6 9"/></svg></div>
<div class="t en" style="left:400px;top:770px;letter-spacing:0.7px">New item fanout service</div>
<div class="t mono ei" style="left:400px;top:790.5px">brain-app</div>
<svg class="abs" style="left:618px;top:782px" width="16" height="16" viewBox="0 0 16 16" fill="#1b1b1b"><path d="M8 0C3.58 0 0 3.58 0 8c0 3.54 2.29 6.53 5.47 7.59.4.07.55-.17.55-.38 0-.19-.01-.82-.01-1.49-2.01.37-2.53-.49-2.69-.94-.09-.23-.48-.94-.82-1.13-.28-.15-.68-.52-.01-.53.63-.01 1.08.58 1.23.82.72 1.21 1.87.87 2.33.66.07-.52.28-.87.51-1.07-1.78-.2-3.64-.89-3.64-3.95 0-.87.31-1.59.82-2.15-.08-.2-.36-1.02.08-2.12 0 0 .67-.21 2.2.82.64-.18 1.32-.27 2-.27s1.36.09 2 .27c1.53-1.04 2.2-.82 2.2-.82.44 1.1.16 1.92.08 2.12.51.56.82 1.27.82 2.15 0 3.07-1.87 3.75-3.65 3.95.29.25.54.73.54 1.48 0 1.07-.01 1.93-.01 2.2 0 .21.15.46.55.38A8.01 8.01 0 0016 8c0-4.42-3.58-8-8-8z"/></svg>
<div class="t mono rp" style="left:647px;top:780.5px">brain-app</div>
<div class="sel" style="top:770px"></div>
<svg class="abs" style="left:1477px;top:784px" width="17" height="13" viewBox="0 0 17 13" fill="none" stroke="#222" stroke-width="1.4" stroke-linecap="round" stroke-linejoin="round"><path d="M1.2 7.4 L5.6 11.6 L15.8 1.2"/></svg>
<div class="t f14" style="left:1500px;top:779.5px;color:#333;letter-spacing:.43px">Accept</div>
<div class="rowline" style="top:816px"></div>
<div class="cb" style="left:323px;top:835px"><svg width="12" height="10" viewBox="0 0 12 10" fill="none" stroke="#fff" stroke-width="1.7" stroke-linecap="round" stroke-linejoin="round"><path d="M1.4 5.2 L4.4 8.2 L10.6 1.6"/></svg></div>
<div class="eic" style="left:360px;top:830px"><svg width="20" height="16" viewBox="0 0 20 16" fill="none" stroke="#17132b" stroke-width="1.2" stroke-linecap="round"><circle cx="9.85" cy="9" r="3.55"/><path d="M7.3 12.7 L5.3 14.7 M12.5 12.7 L14.5 14.7"/><path d="M7.5 3.8 A2.7 2.7 0 1 0 3.45 6.9 L1.2 9"/><path d="M12.2 3.8 A2.7 2.7 0 1 1 16.3 6.9 L18.6 9"/></svg></div>
<div class="t en" style="left:400px;top:825px;letter-spacing:0.5px">Feed calculator job</div>
<div class="t mono ei" style="left:400px;top:845.5px">brain-app</div>
<svg class="abs" style="left:618px;top:837px" width="16" height="16" viewBox="0 0 16 16" fill="#1b1b1b"><path d="M8 0C3.58 0 0 3.58 0 8c0 3.54 2.29 6.53 5.47 7.59.4.07.55-.17.55-.38 0-.19-.01-.82-.01-1.49-2.01.37-2.53-.49-2.69-.94-.09-.23-.48-.94-.82-1.13-.28-.15-.68-.52-.01-.53.63-.01 1.08.58 1.23.82.72 1.21 1.87.87 2.33.66.07-.52.28-.87.51-1.07-1.78-.2-3.64-.89-3.64-3.95 0-.87.31-1.59.82-2.15-.08-.2-.36-1.02.08-2.12 0 0 .67-.21 2.2.82.64-.18 1.32-.27 2-.27s1.36.09 2 .27c1.53-1.04 2.2-.82 2.2-.82.44 1.1.16 1.92.08 2.12.51.56.82 1.27.82 2.15 0 3.07-1.87 3.75-3.65 3.95.29.25.54.73.54 1.48 0 1.07-.01 1.93-.01 2.2 0 .21.15.46.55.38A8.01 8.01 0 0016 8c0-4.42-3.58-8-8-8z"/></svg>
<div class="t mono rp" style="left:647px;top:835.5px">brain-app</div>
<div class="sel" style="top:825px"></div>
<div class="chip" style="top:832px;width:134px"></div>
<div class="chipi" style="top:834.5px"><svg width="15.6" height="12.5" viewBox="0 0 20 16" fill="none" stroke="#0f2616" stroke-width="1.3" stroke-linecap="round"><circle cx="9.85" cy="9" r="3.55"/><path d="M7.3 12.7 L5.3 14.7 M12.5 12.7 L14.5 14.7"/><path d="M7.5 3.8 A2.7 2.7 0 1 0 3.45 6.9 L1.2 9"/><path d="M12.2 3.8 A2.7 2.7 0 1 1 16.3 6.9 L18.6 9"/></svg></div>
<div class="t f14" style="left:945px;top:835px;color:#0f6b2b;letter-spacing:.23px;height:12px;overflow:hidden">+ Frontend</div>
<svg class="abs" style="left:1029px;top:839.5px" width="10" height="10" viewBox="0 0 11 11" fill="none" stroke="#444" stroke-width="1.1" stroke-linecap="round"><path d="M1.2 1.2 L9.8 9.8 M9.8 1.2 L1.2 9.8"/></svg>
<svg class="abs" style="left:1477px;top:839px" width="17" height="13" viewBox="0 0 17 13" fill="none" stroke="#222" stroke-width="1.4" stroke-linecap="round" stroke-linejoin="round"><path d="M1.2 7.4 L5.6 11.6 L15.8 1.2"/></svg>
<div class="t f14" style="left:1500px;top:834.5px;color:#333;letter-spacing:.43px">Accept</div>
<div class="rowline" style="top:871px"></div>
<div class="cb" style="left:323px;top:890px"><svg width="12" height="10" viewBox="0 0 12 10" fill="none" stroke="#fff" stroke-width="1.7" stroke-linecap="round" stroke-linejoin="round"><path d="M1.4 5.2 L4.4 8.2 L10.6 1.6"/></svg></div>
<div class="eic" style="left:360px;top:885px"><svg width="20" height="16" viewBox="0 0 20 16" fill="none" stroke="#17132b" stroke-width="1.2" stroke-linecap="round"><circle cx="9.85" cy="9" r="3.55"/><path d="M7.3 12.7 L5.3 14.7 M12.5 12.7 L14.5 14.7"/><path d="M7.5 3.8 A2.7 2.7 0 1 0 3.45 6.9 L1.2 9"/><path d="M12.2 3.8 A2.7 2.7 0 1 1 16.3 6.9 L18.6 9"/></svg></div>
<div class="t en" style="left:400px;top:880px;letter-spacing:0.66px">Image recognition pip...</div>
<div class="t mono ei" style="left:400px;top:900.5px">brain-app</div>
<svg class="abs" style="left:618px;top:892px" width="16" height="16" viewBox="0 0 16 16" fill="#1b1b1b"><path d="M8 0C3.58 0 0 3.58 0 8c0 3.54 2.29 6.53 5.47 7.59.4.07.55-.17.55-.38 0-.19-.01-.82-.01-1.49-2.01.37-2.53-.49-2.69-.94-.09-.23-.48-.94-.82-1.13-.28-.15-.68-.52-.01-.53.63-.01 1.08.58 1.23.82.72 1.21 1.87.87 2.33.66.07-.52.28-.87.51-1.07-1.78-.2-3.64-.89-3.64-3.95 0-.87.31-1.59.82-2.15-.08-.2-.36-1.02.08-2.12 0 0 .67-.21 2.2.82.64-.18 1.32-.27 2-.27s1.36.09 2 .27c1.53-1.04 2.2-.82 2.2-.82.44 1.1.16 1.92.08 2.12.51.56.82 1.27.82 2.15 0 3.07-1.87 3.75-3.65 3.95.29.25.54.73.54 1.48 0 1.07-.01 1.93-.01 2.2 0 .21.15.46.55.38A8.01 8.01 0 0016 8c0-4.42-3.58-8-8-8z"/></svg>
<div class="t mono rp" style="left:647px;top:890.5px">brain-app</div>
<div class="sel" style="top:880px"></div>
<div class="chip" style="top:887px;width:171px"></div>
<div class="chipi" style="top:889.5px"><svg width="15.6" height="12.5" viewBox="0 0 20 16" fill="none" stroke="#0f2616" stroke-width="1.3" stroke-linecap="round"><circle cx="9.85" cy="9" r="3.55"/><path d="M7.3 12.7 L5.3 14.7 M12.5 12.7 L14.5 14.7"/><path d="M7.5 3.8 A2.7 2.7 0 1 0 3.45 6.9 L1.2 9"/><path d="M12.2 3.8 A2.7 2.7 0 1 1 16.3 6.9 L18.6 9"/></svg></div>
<div class="t f14" style="left:945px;top:890px;color:#0f6b2b;letter-spacing:0.49px">+ Platform team</div>
<svg class="abs" style="left:1066px;top:894.5px" width="10" height="10" viewBox="0 0 11 11" fill="none" stroke="#444" stroke-width="1.1" stroke-linecap="round"><path d="M1.2 1.2 L9.8 9.8 M9.8 1.2 L1.2 9.8"/></svg>
<svg class="abs" style="left:1432px;top:896px" width="16" height="10" viewBox="0 0 16 10" fill="none" stroke="#222" stroke-width="1.5" stroke-linecap="round" stroke-linejoin="round"><path d="M1.6 1.4 L8 8 L14.4 1.4"/></svg>
<svg class="abs" style="left:1477px;top:894px" width="17" height="13" viewBox="0 0 17 13" fill="none" stroke="#222" stroke-width="1.4" stroke-linecap="round" stroke-linejoin="round"><path d="M1.2 7.4 L5.6 11.6 L15.8 1.2"/></svg>
<div class="t f14" style="left:1500px;top:889.5px;color:#333;letter-spacing:.43px">Accept</div>
<div class="abs" style="left:905px;top:651px;width:555px;height:197.5px;border:1px solid #dcdcdc;border-radius:9px;background:#fff;box-shadow:0 5px 14px rgba(0,0,0,.2),0 2px 5px rgba(0,0,0,.12)"></div>
<div class="abs" style="left:1445px;top:652px;width:1px;height:196px;background:#e6e6e6"></div>
<div class="abs" style="left:1449px;top:654px;width:7px;height:75px;border-radius:4px;background:#c1c1c1"></div>
<div class="abs" style="left:920px;top:665px;width:20px;height:20px;border:1px solid #dadada;border-radius:3px;background:#efefef;font-size:12.5px;line-height:18px;text-align:center;color:#555">4</div>
<div class="t" style="left:950px;top:665px;font-size:14.3px;color:#222;letter-spacing:.36px;-webkit-text-stroke:.3px #222">Possible owners</div>
<div class="t f14" style="left:1196px;top:665px;color:#666;letter-spacing:.23px">Recommended: 1 per service</div>
<svg class="abs" style="left:1409px;top:670px" width="16" height="10" viewBox="0 0 16 10" fill="none" stroke="#333" stroke-width="1.4" stroke-linecap="round" stroke-linejoin="round"><path d="M1.6 8.4 L8 1.6 L14.4 8.4"/></svg>
<div class="abs" style="left:910px;top:695px;width:530px;height:150px;border-radius:9px;background:#e6f4e9"></div>
<div class="abs" style="left:920px;top:707px;width:20px;height:20px;border-radius:3px;background:#c4b4fc"><div style="position:absolute;left:1.7px;top:3.2px"><svg width="15.6" height="12.5" viewBox="0 0 20 16" fill="none" stroke="#17132b" stroke-width="1.3" stroke-linecap="round"><circle cx="9.85" cy="9" r="3.55"/><path d="M7.3 12.7 L5.3 14.7 M12.5 12.7 L14.5 14.7"/><path d="M7.5 3.8 A2.7 2.7 0 1 0 3.45 6.9 L1.2 9"/><path d="M12.2 3.8 A2.7 2.7 0 1 1 16.3 6.9 L18.6 9"/></svg></div></div>
<div class="t" style="left:950px;top:707px;font-size:16.4px;color:#1c7a35;-webkit-text-stroke:.4px #1c7a35">+</div>
<div class="t" style="left:965px;top:707px;font-size:16.4px;color:#333;letter-spacing:.52px">Backend team</div>
<div class="abs" style="left:1352px;top:707px;width:38px;height:20px;border:1px solid #abd9b3;border-radius:4px;background:#dcf1df"></div>
<div class="t f14" style="left:1356px;top:707px;color:#0f6b2b;letter-spacing:.4px">High</div>
<div class="cb" style="left:1408px;top:707.5px"><svg width="12" height="10" viewBox="0 0 12 10" fill="none" stroke="#fff" stroke-width="1.7" stroke-linecap="round" stroke-linejoin="round"><path d="M1.4 5.2 L4.4 8.2 L10.6 1.6"/></svg></div>
<div class="abs" style="left:920px;top:742px;width:20px;height:20px;border-radius:3px;background:#c4b4fc"><div style="position:absolute;left:1.7px;top:3.2px"><svg width="15.6" height="12.5" viewBox="0 0 20 16" fill="none" stroke="#17132b" stroke-width="1.3" stroke-linecap="round"><circle cx="9.85" cy="9" r="3.55"/><path d="M7.3 12.7 L5.3 14.7 M12.5 12.7 L14.5 14.7"/><path d="M7.5 3.8 A2.7 2.7 0 1 0 3.45 6.9 L1.2 9"/><path d="M12.2 3.8 A2.7 2.7 0 1 1 16.3 6.9 L18.6 9"/></svg></div></div>
<div class="t" style="left:950px;top:742px;font-size:16.4px;color:#1c7a35;-webkit-text-stroke:.4px #1c7a35">+</div>
<div class="t" style="left:965px;top:742px;font-size:16.4px;color:#333;letter-spacing:0.84px">Platform team</div>
<div class="abs" style="left:1330px;top:742px;width:60px;height:20px;border:1px solid #e8d09c;border-radius:4px;background:#f6e6c3"></div>
<div class="t f14" style="left:1333.5px;top:742px;color:#8a4a12;letter-spacing:.4px">Medium</div>
<div class="cbo" style="left:1408px;top:742.5px"></div>
<div class="abs" style="left:920px;top:777px;width:20px;height:20px;border-radius:3px;background:#c4b4fc"><div style="position:absolute;left:1.7px;top:3.2px"><svg width="15.6" height="12.5" viewBox="0 0 20 16" fill="none" stroke="#17132b" stroke-width="1.3" stroke-linecap="round"><circle cx="9.85" cy="9" r="3.55"/><path d="M7.3 12.7 L5.3 14.7 M12.5 12.7 L14.5 14.7"/><path d="M7.5 3.8 A2.7 2.7 0 1 0 3.45 6.9 L1.2 9"/><path d="M12.2 3.8 A2.7 2.7 0 1 1 16.3 6.9 L18.6 9"/></svg></div></div>
<div class="t" style="left:950px;top:777px;font-size:16.4px;color:#1c7a35;-webkit-text-stroke:.4px #1c7a35">+</div>
<div class="t" style="left:965px;top:777px;font-size:16.4px;color:#333;letter-spacing:.52px">Frontend</div>
<div class="abs" style="left:1330px;top:777px;width:60px;height:20px;border:1px solid #e8d09c;border-radius:4px;background:#f6e6c3"></div>
<div class="t f14" style="left:1333.5px;top:777px;color:#8a4a12;letter-spacing:.4px">Medium</div>
<div class="cbo" style="left:1408px;top:777.5px"></div>
<div class="abs" style="left:920px;top:812px;width:20px;height:20px;border-radius:3px;background:#c4b4fc"><div style="position:absolute;left:1.7px;top:3.2px"><svg width="15.6" height="12.5" viewBox="0 0 20 16" fill="none" stroke="#17132b" stroke-width="1.3" stroke-linecap="round"><circle cx="9.85" cy="9" r="3.55"/><path d="M7.3 12.7 L5.3 14.7 M12.5 12.7 L14.5 14.7"/><path d="M7.5 3.8 A2.7 2.7 0 1 0 3.45 6.9 L1.2 9"/><path d="M12.2 3.8 A2.7 2.7 0 1 1 16.3 6.9 L18.6 9"/></svg></div></div>
<div class="t" style="left:950px;top:812px;font-size:16.4px;color:#1c7a35;-webkit-text-stroke:.4px #1c7a35">+</div>
<div class="t" style="left:965px;top:812px;font-size:16.4px;color:#333;letter-spacing:.52px">Payments</div>
<div class="cbo" style="left:1408px;top:812.5px"></div>
<div class="abs" style="left:290px;top:922px;width:1300px;height:30px;background:#f8f8f8"></div>


</div>
</body>
</html>
